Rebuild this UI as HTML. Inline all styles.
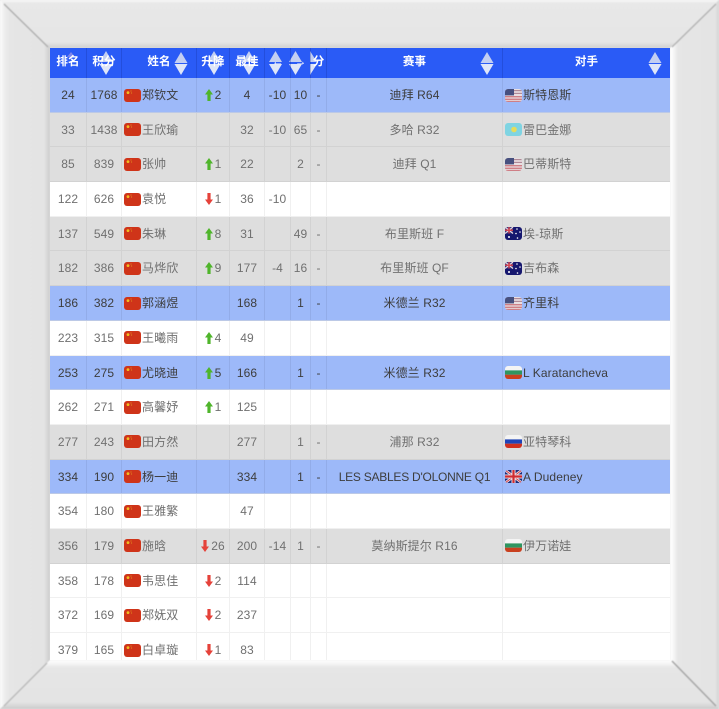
<!DOCTYPE html>
<html lang="zh">
<head>
<meta charset="utf-8">
<title>排名</title>
<style>
html,body{margin:0;padding:0;width:719px;height:709px;overflow:hidden;background:#e6e6e6}
body{position:relative;font-family:"Liberation Sans","Noto Sans CJK SC",sans-serif;font-size:12px}
#frame{position:absolute;left:0;top:0;filter:blur(.5px)}
#wrap{position:absolute;left:50px;top:48px;width:620px;height:612px;overflow:hidden;background:#fff;filter:blur(.3px)}
#head{position:absolute;left:0;top:0;width:620px;height:30px;background:#2a5bf6}
#head svg{position:absolute;left:0;top:0}
.r{display:grid;grid-template-columns:36px 35px 75px 33px 35px 26px 20px 16px 176px 168px;height:34.7px;box-sizing:border-box;line-height:34px;text-align:center;color:#707070;position:relative}
.r>div{border-left:1px solid #f0f0f0;box-sizing:border-box;white-space:nowrap;overflow:hidden;letter-spacing:.1px}
.r>div:first-child{border-left:0}
.h{height:30px;line-height:28px;color:#fff;font-weight:bold;font-size:11.5px;position:relative}
.h>div{border-left:1px solid rgba(20,50,160,.3);overflow:visible}
.w{background:#fff;border-bottom:1px solid #f0f0f0}
.g{background:#dedede;border-bottom:1px solid #d2d2d2}
.g>div{border-left-color:#d2d2d2}
.b{background:#9db9f9;border-bottom:1px solid #bcc9e6;color:#3d3d3d}
.b>div{border-left-color:#92ace9}
.n{text-align:left;padding-left:2px}
.n svg{vertical-align:-2.5px;margin-right:1px}
.o{text-align:left;padding-left:1px}
.o svg{vertical-align:-2.5px;margin-left:1px;margin-right:1px}
.u svg,.d svg{vertical-align:-2px;margin-right:2px}
</style>
</head>
<body>
<svg width="0" height="0" style="position:absolute">
<defs>
<clipPath id="fc"><rect width="17" height="13" rx="3"/></clipPath>
<symbol id="cn" viewBox="0 0 17 13"><g clip-path="url(#fc)"><rect width="17" height="13" fill="#cf3419"/><circle cx="4" cy="3.6" r="1.4" fill="#f0c020"/><circle cx="7" cy="2" r=".5" fill="#e8b020"/><circle cx="7.6" cy="4" r=".5" fill="#e8b020"/></g></symbol>
<symbol id="us" viewBox="0 0 17 13"><g clip-path="url(#fc)"><rect width="17" height="13" fill="#e9dfe2"/><rect y="7" width="17" height="1.4" fill="#cf7f86"/><rect y="9.6" width="17" height="1.4" fill="#cf7f86"/><rect y="11.8" width="17" height="1.4" fill="#cf7f86"/><rect y="1" width="17" height="1.2" fill="#b08a98"/><rect y="3.8" width="17" height="1.2" fill="#b08a98"/><rect width="9" height="6.4" fill="#47507f"/></g></symbol>
<symbol id="kz" viewBox="0 0 17 13"><g clip-path="url(#fc)"><rect width="17" height="13" fill="#7fd4e2"/><circle cx="9" cy="6.5" r="2.8" fill="#e6dc5a"/></g></symbol>
<symbol id="au" viewBox="0 0 17 13"><g clip-path="url(#fc)"><rect width="17" height="13" fill="#16176e"/><rect width="8" height="6.5" fill="#3a3a80"/><path d="M0 0L8 6.5M8 0L0 6.5" stroke="#e8d8e0" stroke-width="1.2"/><path d="M4 0V6.5M0 3.2H8" stroke="#d8404a" stroke-width="1.4"/><g fill="#fff"><circle cx="4" cy="10" r="1"/><circle cx="12" cy="2" r=".8"/><circle cx="15" cy="5" r=".8"/><circle cx="11" cy="6.5" r=".8"/><circle cx="12.5" cy="11" r=".8"/></g></g></symbol>
<symbol id="bg" viewBox="0 0 17 13"><g clip-path="url(#fc)"><rect width="17" height="4.4" fill="#f4f4f4"/><rect y="4.4" width="17" height="4.3" fill="#2e9560"/><rect y="8.7" width="17" height="4.3" fill="#c9401f"/></g></symbol>
<symbol id="ru" viewBox="0 0 17 13"><g clip-path="url(#fc)"><rect width="17" height="4.4" fill="#f4f4f4"/><rect y="4.4" width="17" height="4.3" fill="#1f44b8"/><rect y="8.7" width="17" height="4.3" fill="#d0301f"/></g></symbol>
<symbol id="gb" viewBox="0 0 17 13"><g clip-path="url(#fc)"><rect width="17" height="13" fill="#1c2a78"/><path d="M0 0L17 13M17 0L0 13" stroke="#efe6ea" stroke-width="2.6"/><path d="M0 0L17 13M17 0L0 13" stroke="#d0404a" stroke-width="1"/><path d="M8.5 0V13M0 6.5H17" stroke="#efe6ea" stroke-width="4"/><path d="M8.5 0V13M0 6.5H17" stroke="#d02c30" stroke-width="2.2"/></g></symbol>
<symbol id="up" viewBox="0 0 8 12"><path d="M4 0L8 5.500H5.600V12H2.400V5.500H0Z" fill="#4fb52b"/></symbol>
<symbol id="dn" viewBox="0 0 8 12"><path d="M4 12L8 6.500H5.600V0H2.400V6.500H0Z" fill="#e5423a"/></symbol>
</defs>
</svg>

<svg id="frame" width="719" height="709">
<defs>
<linearGradient id="gt" x1="0" y1="0" x2="0" y2="1"><stop offset="0" stop-color="#fafafa"/><stop offset=".07" stop-color="#e8e8e8"/><stop offset=".88" stop-color="#e6e6e6"/><stop offset="1" stop-color="#d0d0d0"/></linearGradient>
<linearGradient id="gl" x1="0" y1="0" x2="1" y2="0"><stop offset="0" stop-color="#fdfdfd"/><stop offset=".1" stop-color="#ececec"/><stop offset=".2" stop-color="#e6e6e6"/><stop offset=".88" stop-color="#e4e4e4"/><stop offset="1" stop-color="#cccccc"/></linearGradient>
<linearGradient id="gr" x1="0" y1="0" x2="1" y2="0"><stop offset="0" stop-color="#fff"/><stop offset=".08" stop-color="#f6f6f6"/><stop offset=".16" stop-color="#e6e6e6"/><stop offset=".92" stop-color="#e4e4e4"/><stop offset="1" stop-color="#d4d4d4"/></linearGradient>
<linearGradient id="gb2" x1="0" y1="0" x2="0" y2="1"><stop offset="0" stop-color="#fff"/><stop offset=".08" stop-color="#f4f4f4"/><stop offset=".16" stop-color="#e6e6e6"/><stop offset=".86" stop-color="#e4e4e4"/><stop offset="1" stop-color="#cbcbcb"/></linearGradient>
</defs>
<rect width="719" height="709" fill="#e6e6e6"/>
<polygon points="0,0 719,0 670,48 50,48" fill="url(#gt)"/>
<polygon points="0,0 50,48 50,660 0,709" fill="url(#gl)"/>
<polygon points="719,0 719,709 670,660 670,48" fill="url(#gr)"/>
<polygon points="0,709 50,660 670,660 719,709" fill="url(#gb2)"/>
<path d="M4 4L48 47" stroke="#b0b0b0" stroke-width="1.4"/>
<path d="M716 4L672 47" stroke="#b4b4b4" stroke-width="1.4"/>
<path d="M4 706L47 663" stroke="#bcbcbc" stroke-width="1.4"/>
<path d="M672 661L716 706" stroke="#a8a8a8" stroke-width="1.6"/>
</svg>

<div id="wrap">
<div id="head">
<svg width="620" height="30">
<path d="M21 4L25 9H17Z" fill="#7d86ea"/>
<g fill="#c3cff2">
<path d="M56 3L62.500 14H49.500Z"/>
<path d="M131 4L137.500 15H124.500Z"/>
<path d="M164 3L170.500 14H157.500Z"/>
<path d="M199 3L205.500 14H192.500Z"/>
<path d="M225.500 3L232 14H219Z"/>
<path d="M245.500 3L252 14H239Z"/>
<path d="M260 3L267 14H260Z"/>
<path d="M437 4L443.500 15H430.500Z"/>
<path d="M605 4L611.500 15H598.500Z"/>
</g>
<g fill="#dfe6f8">
<path d="M56 27L62.500 16H49.500Z"/>
<path d="M131 27L137.500 16H124.500Z"/>
<path d="M164 27L170.500 16H157.500Z"/>
<path d="M199 27L205.500 16H192.500Z"/>
<path d="M225.500 27L232 16H219Z"/>
<path d="M245.500 27L252 16H239Z"/>
<path d="M260 27L267 16H260Z"/>
<path d="M437 27L443.500 16H430.500Z"/>
<path d="M605 27L611.500 16H598.500Z"/>
</g>
</svg>
<div class="r h"><div>排名</div><div>积分</div><div>姓名</div><div>升降</div><div>最佳</div><div>←</div><div>→</div><div>分</div><div>赛事</div><div>对手</div></div>
</div>
<div style="position:absolute;left:0;top:30px;width:620px">
<div class="r b"><div>24</div><div>1768</div><div class="n"><svg width="17" height="13"><use href="#cn"/></svg>郑钦文</div><div class="u"><svg width="8" height="12"><use href="#up"/></svg>2</div><div>4</div><div>-10</div><div>10</div><div>-</div><div>迪拜 R64</div><div class="o"><svg width="17" height="13"><use href="#us"/></svg>斯特恩斯</div></div>
<div class="r g"><div>33</div><div>1438</div><div class="n"><svg width="17" height="13"><use href="#cn"/></svg>王欣瑜</div><div></div><div>32</div><div>-10</div><div>65</div><div>-</div><div>多哈 R32</div><div class="o"><svg width="17" height="13"><use href="#kz"/></svg>雷巴金娜</div></div>
<div class="r g"><div>85</div><div>839</div><div class="n"><svg width="17" height="13"><use href="#cn"/></svg>张帅</div><div class="u"><svg width="8" height="12"><use href="#up"/></svg>1</div><div>22</div><div></div><div>2</div><div>-</div><div>迪拜 Q1</div><div class="o"><svg width="17" height="13"><use href="#us"/></svg>巴蒂斯特</div></div>
<div class="r w"><div>122</div><div>626</div><div class="n"><svg width="17" height="13"><use href="#cn"/></svg>袁悦</div><div class="d"><svg width="8" height="12"><use href="#dn"/></svg>1</div><div>36</div><div>-10</div><div></div><div></div><div></div><div></div></div>
<div class="r g"><div>137</div><div>549</div><div class="n"><svg width="17" height="13"><use href="#cn"/></svg>朱琳</div><div class="u"><svg width="8" height="12"><use href="#up"/></svg>8</div><div>31</div><div></div><div>49</div><div>-</div><div>布里斯班 F</div><div class="o"><svg width="17" height="13"><use href="#au"/></svg>埃-琼斯</div></div>
<div class="r g"><div>182</div><div>386</div><div class="n"><svg width="17" height="13"><use href="#cn"/></svg>马烨欣</div><div class="u"><svg width="8" height="12"><use href="#up"/></svg>9</div><div>177</div><div>-4</div><div>16</div><div>-</div><div>布里斯班 QF</div><div class="o"><svg width="17" height="13"><use href="#au"/></svg>吉布森</div></div>
<div class="r b"><div>186</div><div>382</div><div class="n"><svg width="17" height="13"><use href="#cn"/></svg>郭涵煜</div><div></div><div>168</div><div></div><div>1</div><div>-</div><div>米德兰 R32</div><div class="o"><svg width="17" height="13"><use href="#us"/></svg>齐里科</div></div>
<div class="r w"><div>223</div><div>315</div><div class="n"><svg width="17" height="13"><use href="#cn"/></svg>王曦雨</div><div class="u"><svg width="8" height="12"><use href="#up"/></svg>4</div><div>49</div><div></div><div></div><div></div><div></div><div></div></div>
<div class="r b"><div>253</div><div>275</div><div class="n"><svg width="17" height="13"><use href="#cn"/></svg>尤晓迪</div><div class="u"><svg width="8" height="12"><use href="#up"/></svg>5</div><div>166</div><div></div><div>1</div><div>-</div><div>米德兰 R32</div><div class="o"><svg width="17" height="13"><use href="#bg"/></svg>L Karatancheva</div></div>
<div class="r w"><div>262</div><div>271</div><div class="n"><svg width="17" height="13"><use href="#cn"/></svg>高馨妤</div><div class="u"><svg width="8" height="12"><use href="#up"/></svg>1</div><div>125</div><div></div><div></div><div></div><div></div><div></div></div>
<div class="r g"><div>277</div><div>243</div><div class="n"><svg width="17" height="13"><use href="#cn"/></svg>田方然</div><div></div><div>277</div><div></div><div>1</div><div>-</div><div>浦那 R32</div><div class="o"><svg width="17" height="13"><use href="#ru"/></svg>亚特琴科</div></div>
<div class="r b"><div>334</div><div>190</div><div class="n"><svg width="17" height="13"><use href="#cn"/></svg>杨一迪</div><div></div><div>334</div><div></div><div>1</div><div>-</div><div style="letter-spacing:-.25px">LES SABLES D'OLONNE Q1</div><div class="o"><svg width="17" height="13"><use href="#gb"/></svg>A Dudeney</div></div>
<div class="r w"><div>354</div><div>180</div><div class="n"><svg width="17" height="13"><use href="#cn"/></svg>王雅繁</div><div></div><div>47</div><div></div><div></div><div></div><div></div><div></div></div>
<div class="r g"><div>356</div><div>179</div><div class="n"><svg width="17" height="13"><use href="#cn"/></svg>施晗</div><div class="d"><svg width="8" height="12"><use href="#dn"/></svg>26</div><div>200</div><div>-14</div><div>1</div><div>-</div><div>莫纳斯提尔 R16</div><div class="o"><svg width="17" height="13"><use href="#bg"/></svg>伊万诺娃</div></div>
<div class="r w"><div>358</div><div>178</div><div class="n"><svg width="17" height="13"><use href="#cn"/></svg>韦思佳</div><div class="d"><svg width="8" height="12"><use href="#dn"/></svg>2</div><div>114</div><div></div><div></div><div></div><div></div><div></div></div>
<div class="r w"><div>372</div><div>169</div><div class="n"><svg width="17" height="13"><use href="#cn"/></svg>郑妩双</div><div class="d"><svg width="8" height="12"><use href="#dn"/></svg>2</div><div>237</div><div></div><div></div><div></div><div></div><div></div></div>
<div class="r w"><div>379</div><div>165</div><div class="n"><svg width="17" height="13"><use href="#cn"/></svg>白卓璇</div><div class="d"><svg width="8" height="12"><use href="#dn"/></svg>1</div><div>83</div><div></div><div></div><div></div><div></div><div></div></div>
</div>
</div>
</body>
</html>
